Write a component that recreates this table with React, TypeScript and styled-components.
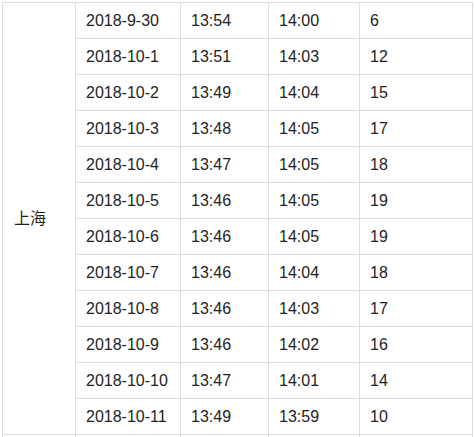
import styled, { createGlobalStyle } from 'styled-components';

const GlobalStyle = createGlobalStyle`
  html, body {
    margin: 0;
    padding: 0;
    background: #ffffff;
  }
  body {
    font-family: "Liberation Sans", Arial, "Noto Sans CJK SC", sans-serif;
  }
`;

const Page = styled.div`
  padding: 2px 0 0 2px;
`;

const Table = styled.table`
  border-collapse: collapse;
  table-layout: fixed;
  width: 471px;
  font-size: 16px;
  color: #1e1e1e;
`;

const Col = styled.col<{ $w: number }>`
  width: ${(p) => p.$w}px;
`;

const Cell = styled.td`
  border: 1px solid #dddddd;
  height: 35px;
  padding: 0 10px;
  box-sizing: content-box;
  vertical-align: middle;
  white-space: nowrap;
  line-height: 20px;
`;

const CityCell = styled(Cell)`
  padding-left: 11px;
`;

interface IRow {
  date: string;
  start: string;
  end: string;
  count: number;
}

const rows: IRow[] = [
  { date: '2018-9-30', start: '13:54', end: '14:00', count: 6 },
  { date: '2018-10-1', start: '13:51', end: '14:03', count: 12 },
  { date: '2018-10-2', start: '13:49', end: '14:04', count: 15 },
  { date: '2018-10-3', start: '13:48', end: '14:05', count: 17 },
  { date: '2018-10-4', start: '13:47', end: '14:05', count: 18 },
  { date: '2018-10-5', start: '13:46', end: '14:05', count: 19 },
  { date: '2018-10-6', start: '13:46', end: '14:05', count: 19 },
  { date: '2018-10-7', start: '13:46', end: '14:04', count: 18 },
  { date: '2018-10-8', start: '13:46', end: '14:03', count: 17 },
  { date: '2018-10-9', start: '13:46', end: '14:02', count: 16 },
  { date: '2018-10-10', start: '13:47', end: '14:01', count: 14 },
  { date: '2018-10-11', start: '13:49', end: '13:59', count: 10 },
];

export default function App(): JSX.Element {
  return (
    <Page>
      <GlobalStyle />
      <Table>
        <colgroup>
          <Col $w={73} />
          <Col $w={105} />
          <Col $w={88} />
          <Col $w={91} />
          <Col $w={113} />
        </colgroup>
        <tbody>
          {rows.map((r, i) => (
            <tr key={r.date}>
              {i === 0 && <CityCell rowSpan={rows.length}>上海</CityCell>}
              <Cell>{r.date}</Cell>
              <Cell>{r.start}</Cell>
              <Cell>{r.end}</Cell>
              <Cell>{r.count}</Cell>
            </tr>
          ))}
          <tr>
            <Cell />
            <Cell />
            <Cell />
            <Cell />
            <Cell />
          </tr>
        </tbody>
      </Table>
    </Page>
  );
}
